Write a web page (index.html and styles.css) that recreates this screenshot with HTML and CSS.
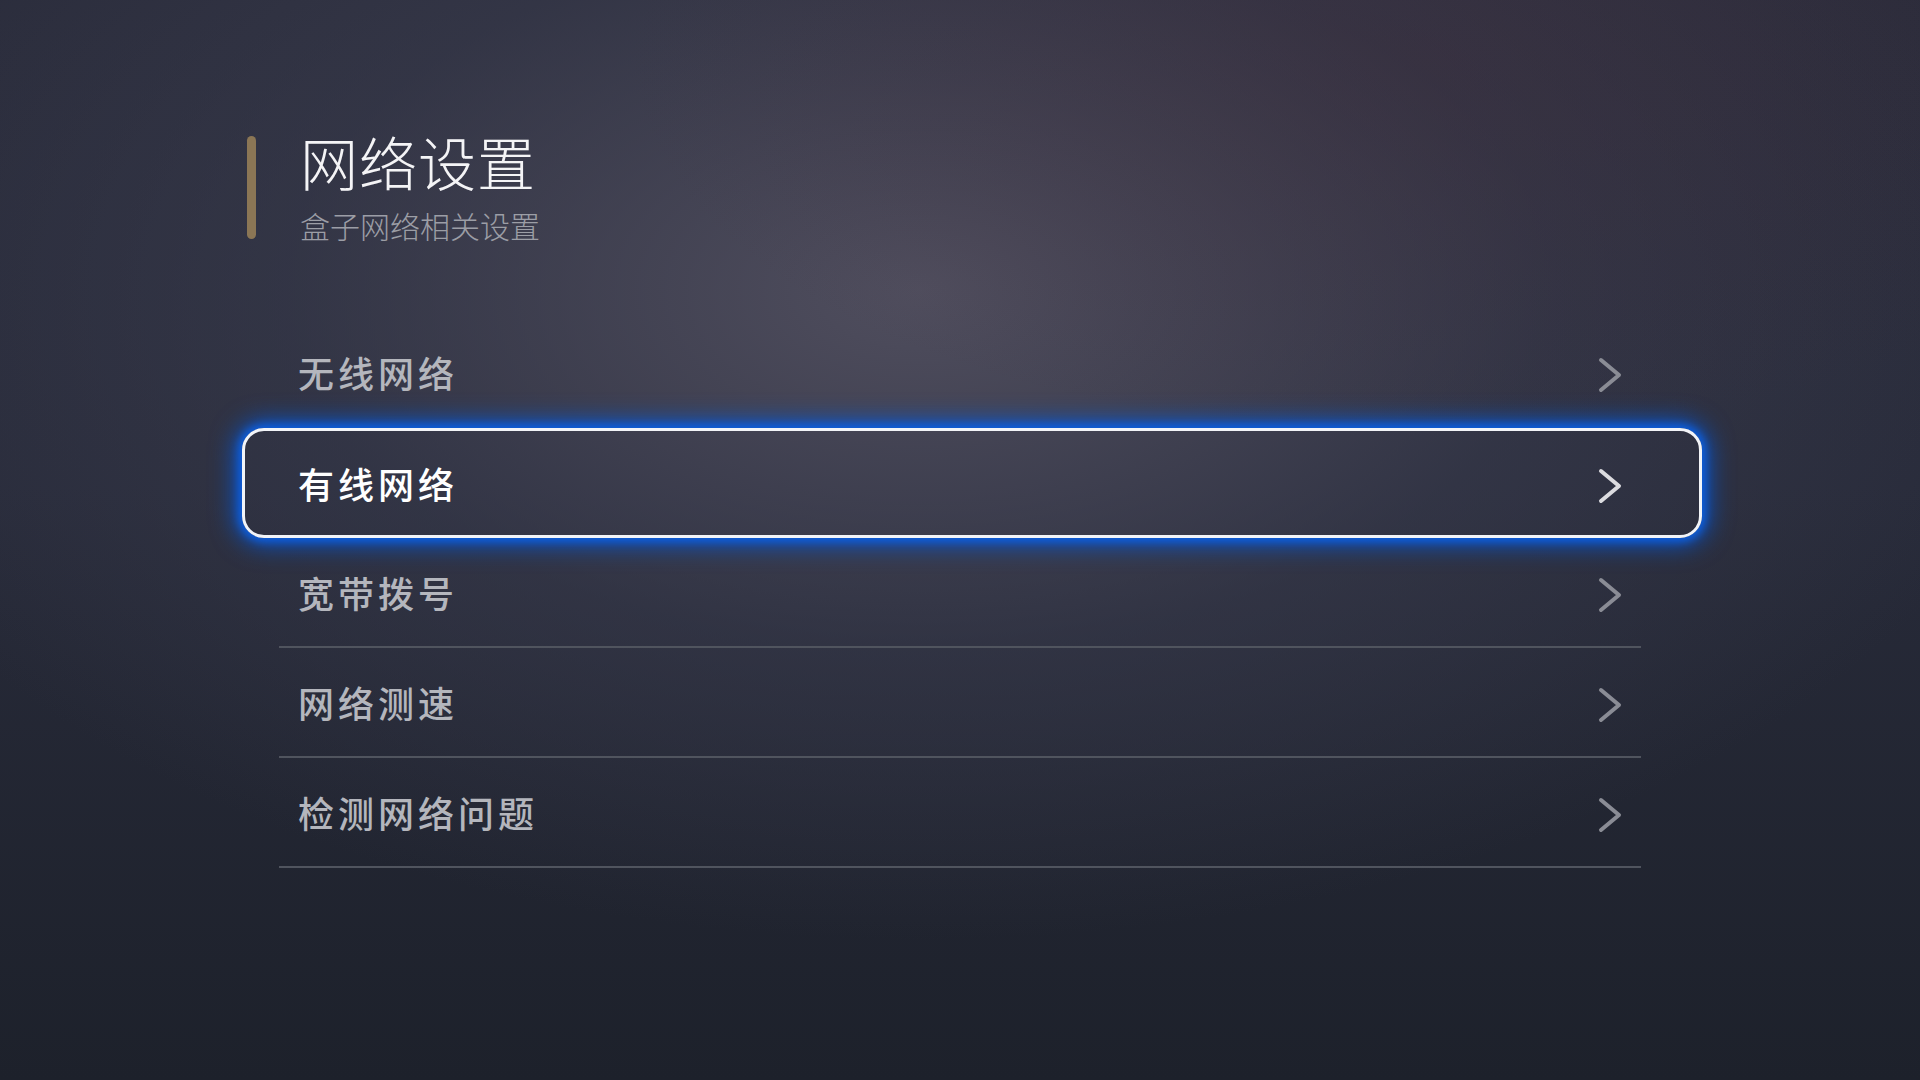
FILE: index.html
```html
<!DOCTYPE html>
<html lang="zh-CN">
<head>
    <meta charset="UTF-8">
    <meta name="viewport" content="width=device-width, initial-scale=1.0">
    <title>网络设置</title>
    <link rel="stylesheet" href="styles.css">
</head>
<body>
    <header class="page-head">
        <div class="accent-bar"></div>
        <div class="head-text">
            <h1 class="title">网络设置</h1>
            <p class="subtitle">盒子网络相关设置</p>
        </div>
    </header>

    <ul class="menu">
        <li class="menu-item no-line">
            <span class="label">无线网络</span>
            <svg class="chevron" viewBox="0 0 24 36" width="24" height="36"><path d="M3 3 L21 18 L3 33"/></svg>
        </li>
        <li class="menu-item focused">
            <span class="label">有线网络</span>
            <svg class="chevron" viewBox="0 0 24 36" width="24" height="36"><path d="M3 3 L21 18 L3 33"/></svg>
        </li>
        <li class="menu-item">
            <span class="label">宽带拨号</span>
            <svg class="chevron" viewBox="0 0 24 36" width="24" height="36"><path d="M3 3 L21 18 L3 33"/></svg>
        </li>
        <li class="menu-item">
            <span class="label">网络测速</span>
            <svg class="chevron" viewBox="0 0 24 36" width="24" height="36"><path d="M3 3 L21 18 L3 33"/></svg>
        </li>
        <li class="menu-item">
            <span class="label">检测网络问题</span>
            <svg class="chevron" viewBox="0 0 24 36" width="24" height="36"><path d="M3 3 L21 18 L3 33"/></svg>
        </li>
    </ul>
</body>
</html>
```

FILE: styles.css
```css
body {
    margin: 0;
    width: 1920px;
    height: 1080px;
    overflow: hidden;
    font-family: "Noto Sans CJK SC", "Noto Sans", sans-serif;
    color: #fff;
    background:
        radial-gradient(ellipse 800px 380px at 1420px 60px, rgba(64, 44, 58, 0.35), rgba(64, 44, 58, 0) 100%),
        radial-gradient(ellipse 1150px 650px at 920px 290px, rgba(82, 80, 96, 0.95), rgba(60, 62, 80, 0.5) 55%, rgba(40, 42, 56, 0) 100%),
        linear-gradient(to bottom, #2a2c3b 0%, #282b3a 45%, #1d212b 100%);
}

.page-head {
    display: flex;
    align-items: center;
    padding: 131px 0 0 247px;
}

.accent-bar {
    width: 9px;
    height: 103px;
    border-radius: 5px;
    background: #8b7655;
}

.head-text {
    margin-left: 44px;
}

.title {
    margin: 0;
    font-family: "Noto Sans CJK SC Light", "Noto Sans CJK SC DemiLight", "Noto Sans CJK SC", sans-serif;
    font-size: 58px;
    font-weight: 200;
    line-height: 60px;
    letter-spacing: 1px;
    color: #f4f4f6;
}

.subtitle {
    margin: 16px 0 0;
    font-family: "Noto Sans CJK SC Light", "Noto Sans CJK SC DemiLight", "Noto Sans CJK SC", sans-serif;
    font-size: 30px;
    font-weight: 200;
    line-height: 36px;
    color: #9c9ea6;
}

.menu {
    list-style: none;
    margin: 75px 0 0 242px;
    padding: 0;
    width: 1460px;
}

.menu-item {
    display: flex;
    align-items: center;
    justify-content: space-between;
    box-sizing: border-box;
    height: 110px;
    margin: 0 61px 0 37px;
    padding: 0 19px 0 19px;
    border-bottom: 2px solid #50545e;
}

.menu-item.no-line {
    border-bottom-color: transparent;
}

.label {
    font-size: 36px;
    font-weight: 500;
    letter-spacing: 4px;
    color: #b4b6bd;
}

.chevron {
    margin-top: 6px;
}

.chevron path {
    fill: none;
    stroke: #8a8c95;
    stroke-width: 4;
    stroke-linecap: round;
    stroke-linejoin: round;
}

.menu-item.focused {
    margin: 0;
    padding: 0 77px 0 53px;
    border: 3px solid #f2f4f8;
    border-radius: 22px;
    box-shadow: 0 0 24px 7px rgba(6, 86, 214, 0.9), 0 0 8px 3px rgba(24, 112, 250, 0.95);
}

.menu-item.focused .label {
    color: #ffffff;
}

.menu-item.focused .chevron path {
    stroke: #dcdce0;
}
```
